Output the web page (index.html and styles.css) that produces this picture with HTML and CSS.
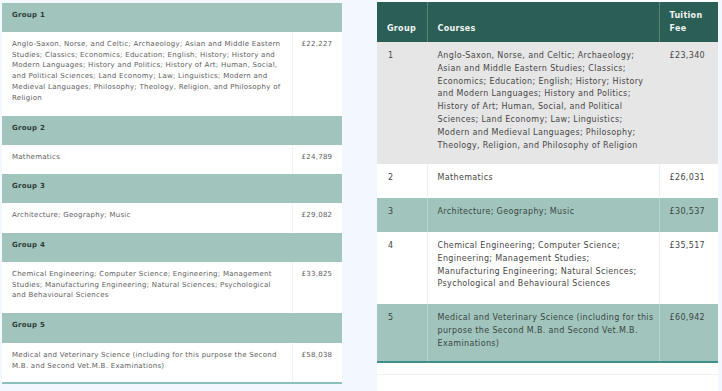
FILE: index.html
```html
<!DOCTYPE html>
<html lang="en">
<head>
<meta charset="utf-8">
<title>Tuition fees</title>
<link rel="stylesheet" href="styles.css">
</head>
<body>
<div class="page">
  <div class="left">
    <table class="t1">
      <colgroup><col class="c1"><col class="c2"></colgroup>
      <tr class="gh h29"><th colspan="2">Group 1</th></tr>
      <tr class="rw h84"><td>Anglo-Saxon, Norse, and Celtic; Archaeology; Asian and Middle Eastern Studies; Classics; Economics; Education; English; History; History and Modern Languages; History and Politics; History of Art; Human, Social, and Political Sciences; Land Economy; Law; Linguistics; Modern and Medieval Languages; Philosophy; Theology, Religion, and Philosophy of Religion</td><td class="f">£22,227</td></tr>
      <tr class="gh h29"><th colspan="2">Group 2</th></tr>
      <tr class="rw h29"><td>Mathematics</td><td class="f">£24,789</td></tr>
      <tr class="gh h29"><th colspan="2">Group 3</th></tr>
      <tr class="rw h30"><td>Architecture; Geography; Music</td><td class="f">£29,082</td></tr>
      <tr class="gh h29"><th colspan="2">Group 4</th></tr>
      <tr class="rw h51"><td>Chemical Engineering; Computer Science; Engineering; Management Studies; Manufacturing Engineering; Natural Sciences; Psychological and Behavioural Sciences</td><td class="f">£33,825</td></tr>
      <tr class="gh h30"><th colspan="2">Group 5</th></tr>
      <tr class="rw h40 last"><td>Medical and Veterinary Science (including for this purpose the Second M.B. and Second Vet.M.B. Examinations)</td><td class="f">£58,038</td></tr>
    </table>
  </div>
  <div class="right">
    <table class="t2">
      <colgroup><col class="d1"><col class="d2"><col class="d3"></colgroup>
      <thead>
        <tr><th>Group</th><th>Courses</th><th>Tuition Fee</th></tr>
      </thead>
      <tbody>
        <tr class="gray k122"><td>1</td><td>Anglo-Saxon, Norse, and Celtic; Archaeology; Asian and Middle Eastern Studies; Classics; Economics; Education; English; History; History and Modern Languages; History and Politics; History of Art; Human, Social, and Political Sciences; Land Economy; Law; Linguistics; Modern and Medieval Languages; Philosophy; Theology, Religion, and Philosophy of Religion</td><td>£23,340</td></tr>
        <tr class="white k34"><td>2</td><td>Mathematics</td><td>£26,031</td></tr>
        <tr class="teal k34"><td>3</td><td>Architecture; Geography; Music</td><td>£30,537</td></tr>
        <tr class="white k72"><td>4</td><td>Chemical Engineering; Computer Science; Engineering; Management Studies; Manufacturing Engineering; Natural Sciences; Psychological and Behavioural Sciences</td><td>£35,517</td></tr>
        <tr class="teal k58"><td>5</td><td>Medical and Veterinary Science (including for this purpose the Second M.B. and Second Vet.M.B. Examinations)</td><td>£60,942</td></tr>
      </tbody>
    </table>
    <div class="after"></div>
  </div>
</div>
</body>
</html>
```
FILE: styles.css
```css
* { box-sizing: border-box; }
html, body { margin: 0; padding: 0; }
body {
  background: #f2f8fd;
  font-family: "DejaVu Sans", Verdana, sans-serif;
  width: 722px;
  height: 391px;
  overflow: hidden;
}
.page {
  display: flex;
  align-items: flex-start;
}
.left {
  padding: 3px 0 0 2px;
  width: 377px;
}
.t1 {
  width: 340px;
  border-collapse: collapse;
  table-layout: fixed;
  font-size: 7px;
  line-height: 10.7px;
  letter-spacing: 0.27px;
}
.c1 { width: 290px; }
.c2 { width: 50px; }
.t1 th {
  background: #a1c5bd;
  color: #2f3a37;
  font-weight: bold;
  text-align: left;
  vertical-align: top;
  padding: 6.5px 10px 0;
}
.t1 td {
  background: #ffffff;
  color: #5e5e5e;
  vertical-align: top;
  padding: 7px 8px 0 10px;
}
.t1 td.f {
  border-left: 1px solid #f3f3f3;
  padding-left: 9px;
  padding-right: 2px;
}
.t1 tr.last td { border-bottom: 2px solid #8dbfbf; }
.h29 { height: 29px; }
.h30 { height: 30px; }
.h40 { height: 40px; }
.h51 { height: 51px; }
.h84 { height: 84px; }

.right {
  width: 341px;
  background: #ffffff;
  padding-top: 2px;
  height: 391px;
}
.t2 {
  width: 341px;
  border-collapse: collapse;
  table-layout: fixed;
  font-size: 8px;
  line-height: 12.8px;
  letter-spacing: 0.35px;
}
.d1 { width: 50px; }
.d2 { width: 232px; }
.d3 { width: 59px; }
.t2 thead tr { height: 40px; }
.t2 th {
  background: #2b5e54;
  color: #f2f6f5;
  font-weight: bold;
  text-align: left;
  vertical-align: bottom;
  line-height: 12.5px;
  letter-spacing: 0.3px;
  padding: 0 6px 7px 10px;
  border-left: 1px solid #5a8479;
}
.t2 th:first-child { border-left: none; }
.t2 td {
  vertical-align: top;
  padding: 8px 5px 0 10px;
  color: #474747;
}
.t2 td + td { border-left: 1px solid #efefef; }
.t2 .gray td { background: #e6e6e6; border-left-color: #e6e6e6; }
.t2 .white td { background: #ffffff; }
.t2 .teal td { background: #a1c5bd; color: #3a4643; border-left-color: #b9d5cf; }
.t2 tbody tr:last-child td { border-bottom: 2px solid #3f8f8f; }
.t2 td:first-child { padding-left: 11px; }
.k34 { height: 34px; }
.k58 { height: 58px; }
.k72 { height: 72px; }
.k122 { height: 122px; }
.after {
  height: 12px;
  border-bottom: 1px solid #f1f1f1;
}
```
